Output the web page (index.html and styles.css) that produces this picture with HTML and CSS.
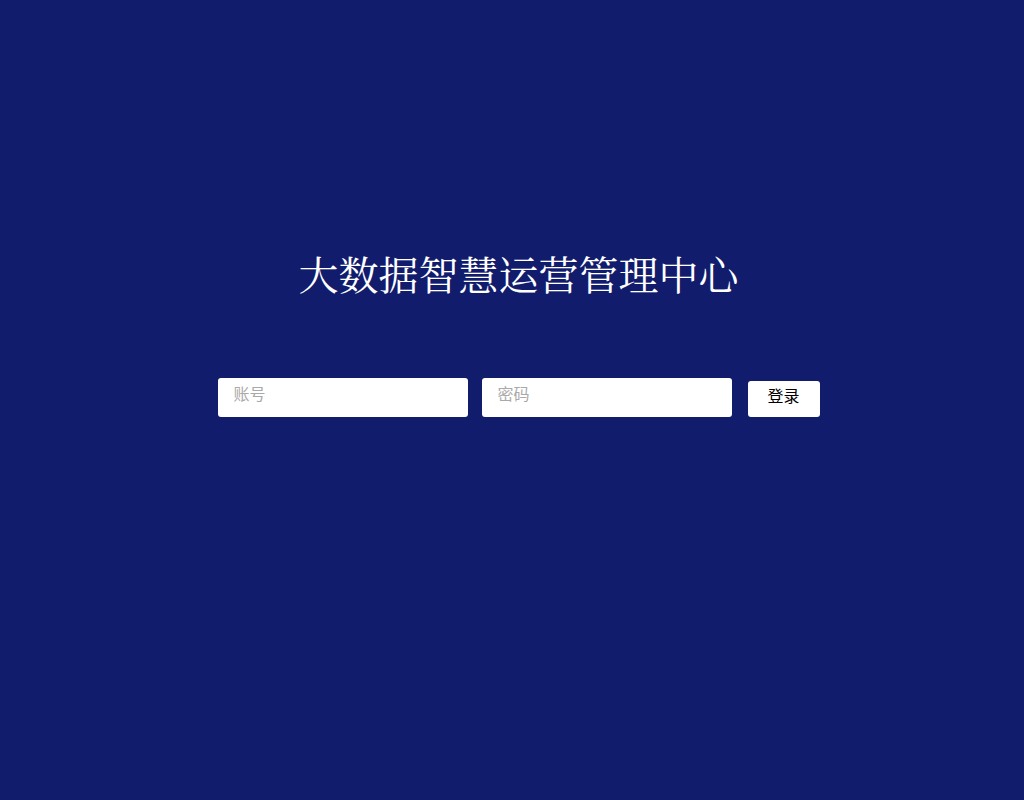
FILE: index.html
```html
<!DOCTYPE html>
<html lang="zh-CN">
<head>
<meta charset="utf-8">
<title>大数据智慧运营管理中心</title>
<link rel="stylesheet" href="styles.css">
</head>
<body>
<div class="page">
  <h1 class="title">大数据智慧运营管理中心</h1>
  <form class="login">
    <input class="field" type="text" placeholder="账号">
    <input class="field" type="password" placeholder="密码">
    <button class="btn" type="button">登录</button>
  </form>
</div>
</body>
</html>
```
FILE: styles.css
```css
html, body {
  margin: 0;
  padding: 0;
  height: 100%;
  background: #111c6c;
}
.page {
  display: flex;
  flex-direction: column;
  align-items: center;
  padding: 248px 0 0 13px;
  box-sizing: border-box;
  height: 100%;
}
.title {
  margin: 0;
  font-family: "Noto Serif CJK SC", serif;
  font-weight: normal;
  font-size: 40px;
  line-height: 50px;
  color: #ffffff;
  letter-spacing: 0;
}
.login {
  display: flex;
  align-items: flex-end;
  margin-top: 80px;
}
.field {
  width: 250px;
  height: 39px;
  box-sizing: border-box;
  border: none;
  border-radius: 3px;
  background: #ffffff;
  padding: 0 16px 10px;
  font-family: "Noto Sans CJK SC", sans-serif;
  font-size: 16px;
  color: #333;
  outline: none;
}
.field + .field {
  margin-left: 14px;
}
.field::placeholder {
  color: #a9a9a9;
}
.btn {
  margin-left: 16px;
  width: 72px;
  height: 36px;
  border: none;
  border-radius: 3px;
  background: #ffffff;
  font-family: "Noto Sans CJK SC", sans-serif;
  font-size: 16px;
  color: #000;
  padding: 0 0 8px;
}
```
